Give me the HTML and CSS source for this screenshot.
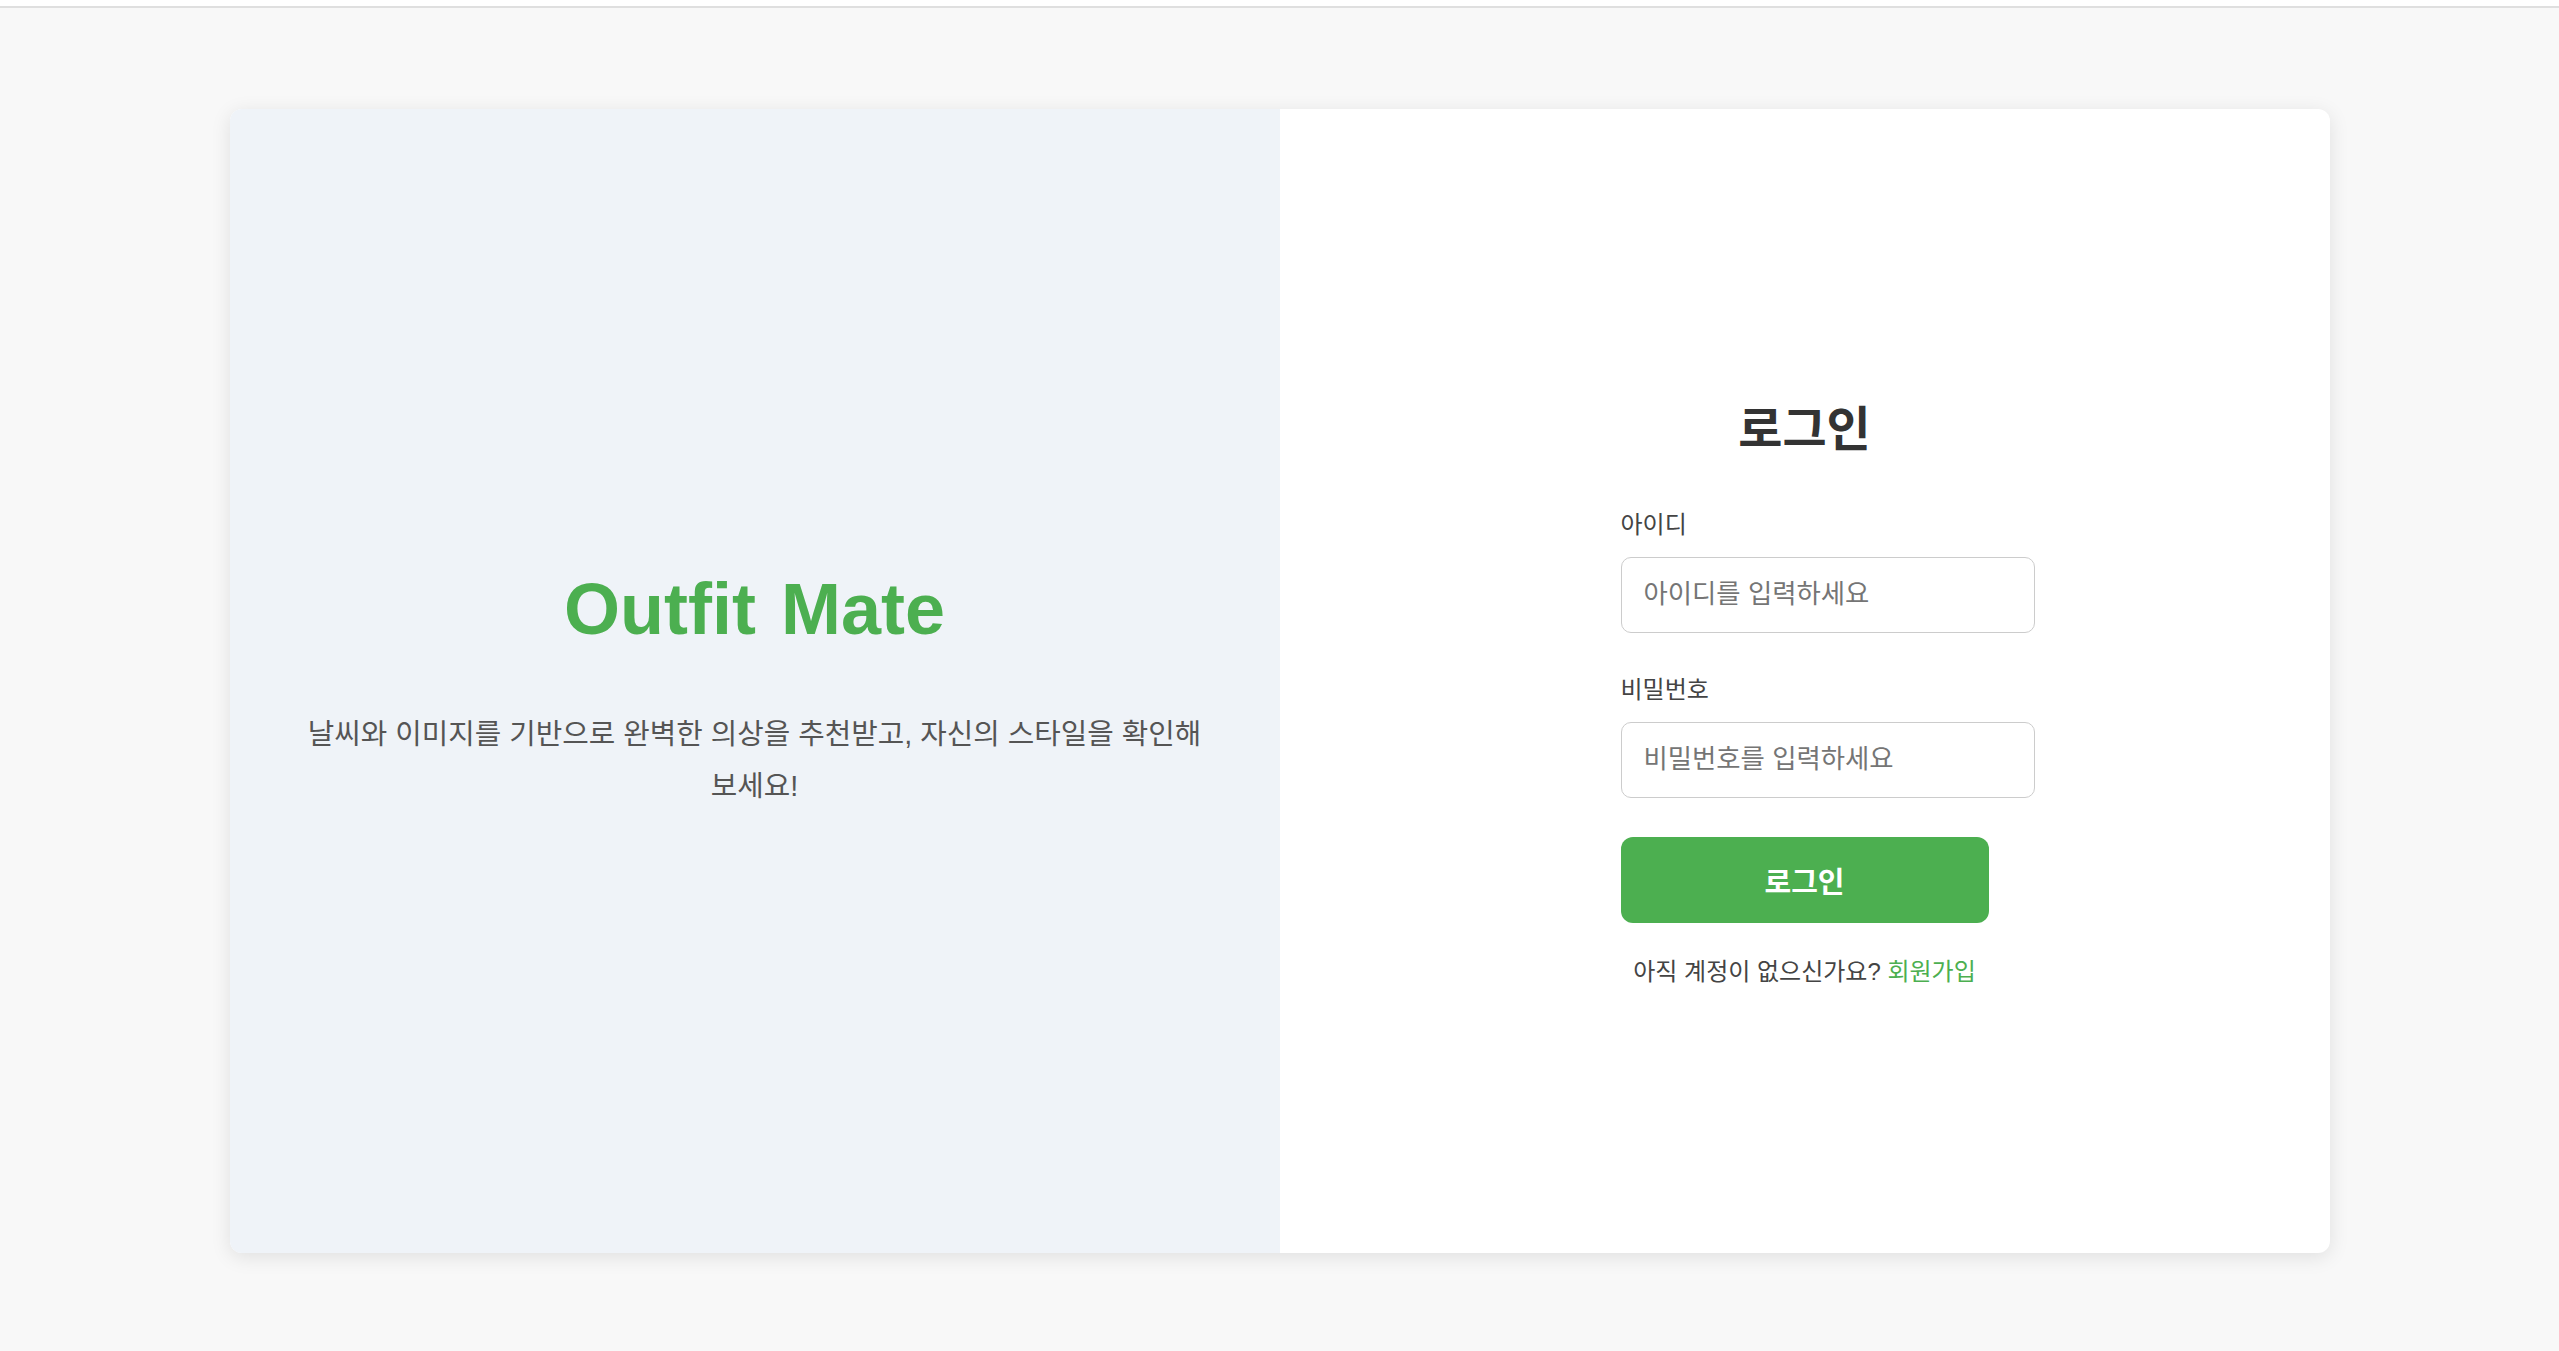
FILE: index.html
```html
<!DOCTYPE html>
<html lang="ko">
<head>
<meta charset="utf-8">
<title>Outfit Mate - 로그인</title>
<link rel="stylesheet" href="styles.css">
</head>
<body>
<div class="topbar"></div>
<main class="page">
  <section class="card">
    <div class="intro">
      <h1 class="brand">Outfit Mate</h1>
      <p class="tagline">날씨와 이미지를 기반으로 완벽한 의상을 추천받고, 자신의 스타일을 확인해 보세요!</p>
    </div>
    <div class="login">
      <form class="login-form">
        <h2 class="login-title">로그인</h2>
        <label class="field-label" for="uid">아이디</label>
        <input class="field-input" id="uid" type="text" placeholder="아이디를 입력하세요">
        <label class="field-label field-label-second" for="pw">비밀번호</label>
        <input class="field-input" id="pw" type="password" placeholder="비밀번호를 입력하세요">
        <button class="login-btn" type="button">로그인</button>
        <p class="signup">아직 계정이 없으신가요? <a class="signup-link" href="#">회원가입</a></p>
      </form>
    </div>
  </section>
</main>
</body>
</html>
```
FILE: styles.css
```css
* { box-sizing: border-box; }
html, body { margin: 0; padding: 0; }
body {
  background: #f8f8f8;
  font-family: "Liberation Sans", "Noto Sans CJK KR", sans-serif;
  color: #444;
  word-break: keep-all;
}
.topbar {
  height: 8px;
  background: #fff;
  border-bottom: 2px solid #dfdfdf;
}
.page {
  height: 1343px;
  display: flex;
  align-items: center;
  justify-content: center;
  padding-top: 2px;
}
.card {
  width: 2100px;
  height: 1144px;
  display: flex;
  border-radius: 12px;
  overflow: hidden;
  background: #fff;
  box-shadow: 0 4px 20px rgba(0, 0, 0, 0.1);
}
.intro {
  flex: 0 0 50%;
  min-width: 0;
  background: #eff3f8;
  display: flex;
  flex-direction: column;
  align-items: center;
  justify-content: center;
  padding: 16px 60px 0;
  text-align: center;
}
.brand {
  margin: 0;
  font-family: "Liberation Sans", Arial, sans-serif;
  font-size: 72px;
  line-height: 89px;
  font-weight: 700;
  color: #4caf50;
  word-spacing: 5px;
}
.tagline {
  margin: 54px 0 0;
  font-size: 28.8px;
  line-height: 52.5px;
  color: #555;
}
.login {
  flex: 0 0 50%;
  min-width: 0;
  display: flex;
  align-items: center;
  justify-content: center;
  padding-top: 28px;
}
.login-form {
  width: 368px;
  display: flex;
  flex-direction: column;
}
.login-title {
  margin: 0 0 50px;
  text-align: center;
  font-size: 48px;
  line-height: 60px;
  font-weight: 700;
  color: #333;
}
.field-label {
  font-size: 24px;
  line-height: 30px;
  color: #444;
  margin-bottom: 17px;
}
.field-label-second { margin-top: 42px; }
.field-input {
  box-sizing: content-box;
  width: 100%;
  height: 74px;
  padding: 0 22px;
  margin: 0;
  border: 1px solid #ccc;
  border-radius: 10px;
  background: #fff;
  font-family: "Liberation Sans", "Noto Sans CJK KR", sans-serif;
  font-size: 26.4px;
  color: #333;
  outline: none;
}
.field-input::placeholder { color: #757575; }
.login-btn {
  margin-top: 39px;
  height: 86px;
  width: 100%;
  border: none;
  border-radius: 12px;
  background: #4caf50;
  color: #fff;
  font-family: "Liberation Sans", "Noto Sans CJK KR", sans-serif;
  font-size: 29px;
  font-weight: 700;
  cursor: pointer;
}
.signup {
  margin: 31px 0 0;
  text-align: center;
  font-size: 24px;
  line-height: 36px;
  color: #444;
}
.signup-link {
  color: #4caf50;
  text-decoration: none;
}
```
